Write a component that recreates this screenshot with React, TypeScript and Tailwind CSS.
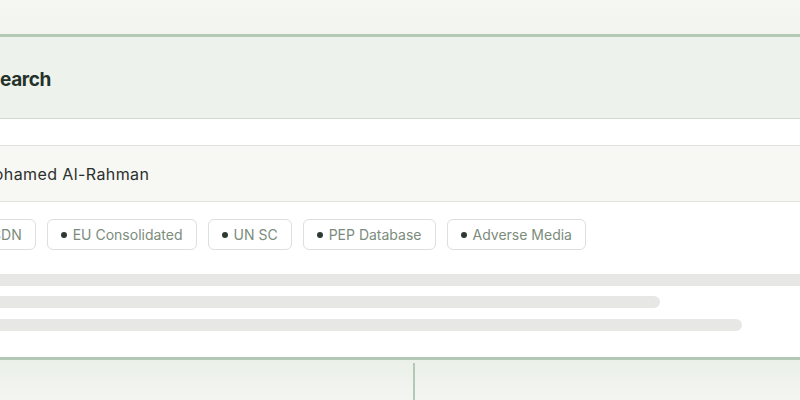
import React from "react";

const lists = ["OFAC SDN", "EU Consolidated", "UN SC", "PEP Database", "Adverse Media"];

function ListChip({ label }: { label: string }) {
  return (
    <div className="flex h-[31px] shrink-0 items-center gap-[6px] rounded-[6px] border border-[#dcdfda] bg-white pl-[13px] pr-[13px]">
      <span className="h-[6px] w-[6px] rounded-full bg-[#2e3a31]" />
      <span className="text-[14px] leading-none text-[#7b8c7c]">{label}</span>
    </div>
  );
}

export default function App() {
  return (
    <div
      className="flex h-[400px] w-[800px] flex-col overflow-hidden bg-[#f3f5f1]"
      style={{ fontFamily: "Inter, 'Noto Sans', sans-serif" }}
    >
      <div className="h-[34px] shrink-0 bg-gradient-to-b from-[#f5f7f3] to-[#f1f4ef]" />

      <section className="shrink-0 border-y-[3px] border-[#b4c8b6] bg-white">
        <header className="flex h-[82px] items-center border-b border-[#d0ddd1] bg-[#edf2ec]">
          <h2 className="ml-[-12px] mt-[3px] text-[19px] font-bold leading-none tracking-[-0.4px] text-[#243229]">
            Search
          </h2>
        </header>

        <div className="flex flex-col pt-[26px] pb-[26px]">
          <div className="ml-[-40px] mr-[-40px] flex h-[57px] items-center border-y border-[#dfe3dd] bg-[#f7f7f4] pl-[19px]">
            <span className="mt-[1px] text-[16px] leading-none tracking-[0.4px] text-[#2b302c]">
              Mohamed Al-Rahman
            </span>
          </div>

          <div className="ml-[-75px] mt-[17px] flex gap-[11px]">
            {lists.map((l) => (
              <ListChip key={l} label={l} />
            ))}
          </div>

          <div className="mt-[24px] flex flex-col gap-[10px]">
            <div className="ml-[-20px] mr-[-20px] h-[12px] rounded-full bg-[#e7e7e5]" />
            <div className="ml-[-20px] h-[12px] w-[680px] rounded-full bg-[#e7e7e5]" />
            <div className="ml-[-20px] mt-[1px] h-[12px] w-[762px] rounded-full bg-[#e7e7e5]" />
          </div>
        </div>
      </section>

      <div className="flex flex-1 bg-gradient-to-b from-[#ebf0e9] to-[#f3f5f1] pt-[3px]">
        <div className="w-[413px] shrink-0" />
        <div className="w-[2px] bg-[#b4c8b6]" />
        <div className="flex-1" />
      </div>
    </div>
  );
}
